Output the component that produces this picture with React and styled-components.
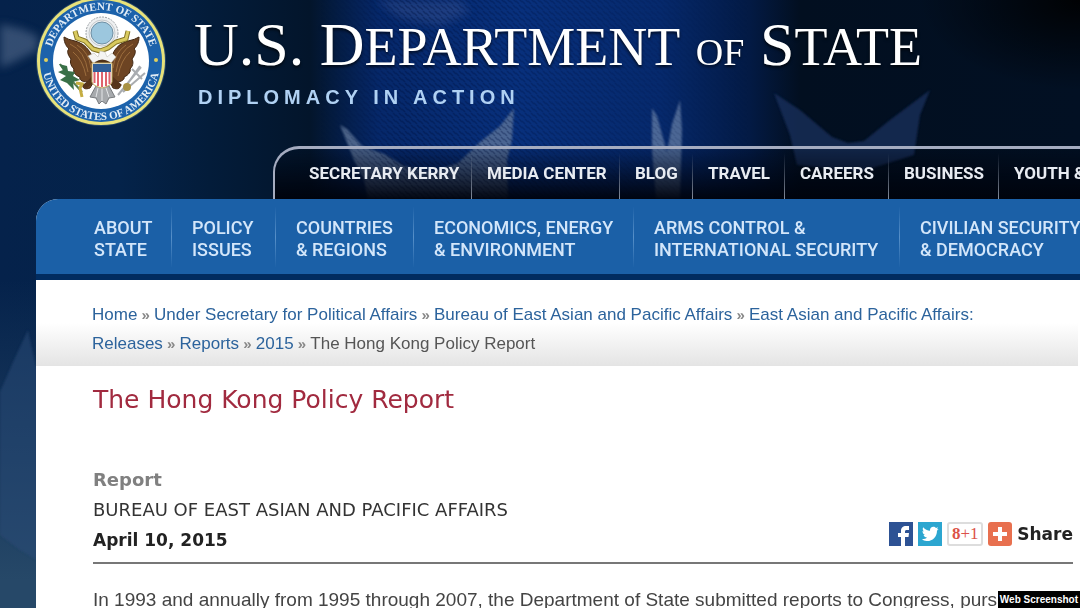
import React from 'react';
import styled, { createGlobalStyle } from 'styled-components';

const topLinks = ['Secretary Kerry', 'Media Center', 'Blog', 'Travel', 'Careers', 'Business', 'Youth & Education'];

const mainLinks = [
  ['About', 'State'],
  ['Policy', 'Issues'],
  ['Countries', '& Regions'],
  ['Economics, Energy', '& Environment'],
  ['Arms Control &', 'International Security'],
  ['Civilian Security', '& Democracy'],
];

const crumbs = [
  'Home',
  'Under Secretary for Political Affairs',
  'Bureau of East Asian and Pacific Affairs',
  'East Asian and Pacific Affairs: Releases',
  'Reports',
  '2015',
];

const Seal = () => (
  <SealSvg viewBox="0 4 130 126" role="img" aria-label="Seal of the Department of State">
    <defs>
      <path id="sealTop" d="M 14 65 A 51 51 0 0 1 116 65" />
      <path id="sealBottom" d="M 6 65 A 59 59 0 0 0 124 65" />
    </defs>
    <circle cx="65" cy="65" r="65" fill="#27476a" />
    <circle cx="65" cy="65" r="64" fill="#e8e27a" />
    <circle cx="65" cy="65" r="61" fill="#1c62ab" />
    <circle cx="65" cy="65" r="48" fill="#fff" />
    <SealText>
      <textPath href="#sealTop" startOffset="50%">DEPARTMENT OF STATE</textPath>
    </SealText>
    <SealText>
      <textPath href="#sealBottom" startOffset="50%">UNITED STATES OF AMERICA</textPath>
    </SealText>
    <circle cx="10" cy="64" r="2" fill="#e0d060" />
    <circle cx="120" cy="64" r="2" fill="#e0d060" />
    {/* glory */}
    <circle cx="66" cy="37" r="16" fill="#eef0f1" stroke="#9da2a6" strokeWidth="1" strokeDasharray="2 1" />
    <circle cx="66" cy="37" r="13" fill="none" stroke="#c5c9cc" strokeWidth="1" />
    <circle cx="66" cy="37" r="11" fill="#9cc7de" stroke="#6f8fa3" strokeWidth="1" />
    {/* wings */}
    <path d="M28 41 C34 45 40 44 46 48 C52 52 56 58 58 66 L60 82 L54 92 C49 94 46 92 47 89 L52 86 C45 86 43 83 44 81 C38 79 37 75 38 73 C34 69 34 65 35 63 C31 58 31 54 33 53 C29 49 28 45 28 41 Z" fill="#6d4423" stroke="#3f2510" />
    <path d="M103 41 C97 45 91 44 85 48 C79 52 76 58 74 66 L72 82 L77 92 C82 94 85 92 84 89 L80 86 C86 86 89 83 88 81 C93 79 95 75 94 73 C98 69 97 65 96 63 C100 58 100 54 98 53 C102 49 103 45 103 41 Z" fill="#6d4423" stroke="#3f2510" />
    <path d="M34 48 Q49 55 52 76 M37 56 Q47 64 50 80 M41 49 Q53 56 55 72 M97 48 Q83 55 80 76 M94 56 Q85 64 82 80 M90 49 Q79 56 77 72" fill="none" stroke="#9c6d3d" strokeWidth="1" />
    {/* ribbon */}
    <path d="M39 35 L41 42 L49 45 L57 53 L64 55 L72 52 L80 46 L90 43 L92 35" fill="none" stroke="#857528" strokeWidth="5" />
    <path d="M39 35 L41 42 L49 45 L57 53 L64 55 L72 52 L80 46 L90 43 L92 35" fill="none" stroke="#d9ca5e" strokeWidth="3" />
    <path d="M52 60 L58 57 L62 61 L64 55 L69 56 L71 61 L76 57 L80 61 L75 67 L57 67 Z" fill="#f4f4f2" stroke="#b9b9ae" strokeWidth="0.5" />
    <path d="M59 66 Q66 61 74 66 L76 72 H57 Z" fill="#4f3119" />
    <path d="M58 86 L50 93 L47 90 L56 80 L76 80 L86 89 L81 93 L74 88 Z" fill="#57351b" />
    {/* tail */}
    <path d="M60 90 L54 101 L60 102 L63 108 L66 105 L70 108 L73 102 L79 101 L73 90 Z" fill="#a7aaad" stroke="#777a7d" />
    <path d="M62 92 L60 101 M66 92 L66 105 M70 92 L73 101" stroke="#e4e6e8" />
    {/* shield */}
    <path d="M56 67 H76 V86 Q75 90 66 92 Q57 90 56 86 Z" fill="#fff" stroke="#c2a860" />
    <path d="M57 68 H75 V76 H57 Z" fill="#315f98" />
    <path d="M58.5 76 V87 M62 76 V90 M66 76 V91 M70 76 V90 M73.500 76 V88" stroke="#e0636d" strokeWidth="2" />
    {/* olive branch and arrows */}
    <path d="M24 68 L30 77 L37 86 L46 96" fill="none" stroke="#557b4c" strokeWidth="2" />
    <path d="M23 68 L31 70 L32 75 L39 76 L37 80 L44 84 L37 86 L38 94 L31 87 L24 84 L30 80 L22 76 L27 74 Z" fill="#397047" />
    <path d="M40 87 L46 88 L44 92 L46 101" fill="none" stroke="#c5ad42" strokeWidth="3" />
    <path d="M82 99 L105 71 M87 96 L109 77 M92 87 L104 70 M96 73 L106 83" stroke="#a9acb0" strokeWidth="2" />
    <circle cx="91" cy="91" r="4" fill="#a99243" />
  </SealSvg>
);

// Faded flag with out-of-focus stars behind the whole page
const Flag = () => (
  <FlagSvg aria-hidden="true">
    <defs>
      <pattern id="weave" width="6" height="6" patternUnits="userSpaceOnUse">
        <path d="M0 1 L3 4 M3 -1 L6 2 M3 5 L6 8" stroke="#00103f" strokeWidth="1.5" opacity="0.4" />
      </pattern>
      <linearGradient id="weaveFade" x1="0" x2="1" y1="0" y2="0">
        <stop offset="0" stopColor="#000" />
        <stop offset="0.2" stopColor="#fff" />
        <stop offset="0.6" stopColor="#999" />
        <stop offset="1" stopColor="#000" />
      </linearGradient>
      <mask id="weaveMask">
        <rect x="320" width="430" height="200" fill="url(#weaveFade)" />
      </mask>
      <filter id="soft" x="-20%" y="-20%" width="140%" height="140%">
        <feGaussianBlur stdDeviation="1" />
      </filter>
      <filter id="softer" x="-40%" y="-40%" width="180%" height="180%">
        <feGaussianBlur stdDeviation="4" />
      </filter>
    </defs>
    <g filter="url(#softer)">
      <path d="M376 0 L460 0 L470 12 L440 26 L400 18 Z" fill="#3b5796" opacity="0.4" />
      <path d="M0 24 L22 29 L38 36 L38 50 L14 62 L0 68 Z" fill="#54698c" opacity="0.6" />
    </g>
    <g filter="url(#soft)">
      <path d="M340 125 L347 129 L362 146 L384 154 L404 166 L432 172 L458 163 L480 142 L500 126 L514 108 L512 140 L507 160 L508 199 L368 199 L364 180 L354 160 Z" fill="#62789b" opacity="0.75" />
      <path d="M652 108 L657 116 L667 152 L672 124 L680 100 L682 130 L680 199 L656 199 L652 150 Z" fill="#647ca4" opacity="0.75" />
      <path d="M774 93 L800 110 L832 137 L848 143 L864 141 L890 120 L930 90 L920 115 L914 155 L860 172 L797 165 L790 135 Z" fill="#1f3767" opacity="0.65" />
      <path d="M28 330 L31 345 L37 370 L37 560 L20 550 L0 535 L0 392 L14 360 Z" fill="#2b4c78" opacity="0.5" />
    </g>
    <rect x="320" width="430" height="200" fill="url(#weave)" mask="url(#weaveMask)" />
  </FlagSvg>
);

const App = () => (
  <>
    <GlobalStyle />
    <Page>
      <Flag />
      <Banner>
        <Seal />
        <div>
          <SiteTitle>
            U.S. D<SmallCap>EPARTMENT</SmallCap> <Of>OF</Of> S<SmallCap>TATE</SmallCap>
          </SiteTitle>
          <Tagline>DIPLOMACY IN ACTION</Tagline>
        </div>
      </Banner>
      <TopNav aria-label="Quick links">
        {topLinks.map((label) => (
          <TopLink key={label} href="#">{label}</TopLink>
        ))}
      </TopNav>
      <Shell>
        <MainNav aria-label="Main">
          {mainLinks.map(([first, second]) => (
            <MainLink key={first} href="#">
              {first}
              <br />
              {second}
            </MainLink>
          ))}
        </MainNav>
        <Crumbs aria-label="Breadcrumb">
          {crumbs.map((crumb) => (
            <React.Fragment key={crumb}>
              <CrumbLink href="#">{crumb}</CrumbLink>
              <Arrow> » </Arrow>
            </React.Fragment>
          ))}
          The Hong Kong Policy Report
        </Crumbs>
        <Article>
          <Title>The Hong Kong Policy Report</Title>
          <Meta>
            <div>
              <Kind>Report</Kind>
              <Bureau>BUREAU OF EAST ASIAN AND PACIFIC AFFAIRS</Bureau>
              <ReportDate>April 10, 2015</ReportDate>
            </div>
            <Share>
              <ShareButton aria-label="Facebook">
                <svg width="24" height="24" viewBox="0 0 24 24">
                  <rect width="24" height="24" fill="#2d5294" />
                  <path d="M12 24 V15 H9 V11 H12 V9 C12 5.500 14 4 17 4 H20 V8 H18 C16.500 8 16 8.500 16 9.500 V11 H20 L19.500 15 H16 V24 Z" fill="#fff" />
                </svg>
              </ShareButton>
              <ShareButton aria-label="Twitter">
                <svg width="24" height="24" viewBox="0 0 24 24">
                  <rect width="24" height="24" fill="#2ca6d0" />
                  <path d="M4 17 C6.500 17 8 16.500 9 15.500 C7 15.500 6 14 5.500 13 H7 C5 12 4.500 10.500 4.500 9 L6 9.500 C4.500 8 4.500 6.500 5.200 5.200 C7 7.500 9.500 8.500 12 8.700 C11.500 5 16 3.500 18 6 L20 5.300 L19 7.200 L20.500 7 L19 8.700 C19 15 14 19.500 8.500 19 C6.500 19 5 18 4 17 Z" fill="#fff" />
                </svg>
              </ShareButton>
              <PlusOne>
                <b>8</b>+1
              </PlusOne>
              <ShareButton aria-label="More services">
                <svg width="24" height="24" viewBox="0 0 24 24">
                  <rect width="24" height="24" rx="3" fill="#e8704f" />
                  <path d="M12 5 V19 M5 12 H19" stroke="#fff" strokeWidth="4" />
                </svg>
              </ShareButton>
              <ShareLabel>Share</ShareLabel>
            </Share>
          </Meta>
          <Body>In 1993 and annually from 1995 through 2007, the Department of State submitted reports to Congress, pursuant</Body>
        </Article>
      </Shell>
      <Credit>Web Screenshot</Credit>
    </Page>
  </>
);

// Styled components
const GlobalStyle = createGlobalStyle`
  * {
    box-sizing: border-box;
  }
  body {
    margin: 0;
    overflow: hidden;
    font-family: 'Liberation Sans', Arial, sans-serif;
  }
  a {
    text-decoration: none;
  }
`;

const Page = styled.div`
  position: relative;
  height: 100vh;
  overflow: hidden;
  display: flex;
  flex-direction: column;
  background:
    radial-gradient(ellipse at 100% 0, rgba(0, 0, 0, 0.9), rgba(0, 0, 0, 0) 160px),
    linear-gradient(180deg, rgba(38, 74, 112, 0) 280px, rgba(38, 72, 104, 1) 580px),
    linear-gradient(90deg, #05224b 0, #04234a 120px, #031c3a 210px, #03152b 310px, #06286a 380px, #08307c 520px, #06296c 660px, #031a44 750px, #020f20 800px, #021023 100%);
`;

const FlagSvg = styled.svg`
  position: absolute;
  top: 0;
  left: 0;
  width: 100%;
  height: 100%;
`;

const Banner = styled.header`
  position: relative;
  display: flex;
  gap: 28px;
  height: 146px;
  padding-left: 36px;
  white-space: nowrap;
`;

const SealSvg = styled.svg`
  flex: none;
  width: 130px;
  height: 126px;
`;

const SealText = styled.text`
  font-family: 'Liberation Serif', serif;
  font-size: 11px;
  font-weight: bold;
  fill: #e3edf6;
  text-anchor: middle;
`;

const SiteTitle = styled.h1`
  margin: 0;
  padding-top: 8px;
  font-family: 'Liberation Serif', 'Times New Roman', serif;
  font-size: 62px;
  line-height: 72px;
  font-weight: normal;
  color: #fff;
  text-shadow: 0 2px 3px rgba(0, 0, 0, 0.7);
`;

const SmallCap = styled.span`
  font-size: 54px;
  line-height: 1;
`;

const Of = styled.span`
  font-size: 38px;
  line-height: 1;
`;

const Tagline = styled.p`
  margin: 0;
  padding-left: 4px;
  font-size: 20px;
  line-height: 34px;
  font-weight: bold;
  letter-spacing: 5px;
  color: #b0d1f3;
`;

const TopNav = styled.nav`
  position: relative;
  display: grid;
  grid-template-columns: 196px 148px 73px 92px 104px 110px 1fr;
  height: 53px;
  margin-left: 273px;
  border: solid #a5acc0;
  border-width: 3px 0 0 2px;
  border-top-left-radius: 26px;
  overflow: hidden;
  white-space: nowrap;
  background: linear-gradient(180deg, rgba(0, 5, 15, 0.1), rgba(0, 3, 12, 0.95));
`;

const TopLink = styled.a`
  padding-left: 15px;
  border-left: 1px solid;
  border-image: linear-gradient(180deg, transparent 10%, #8790a0) 1;
  font-family: Roboto, sans-serif;
  font-size: 17px;
  line-height: 48px;
  font-weight: bold;
  text-transform: uppercase;
  color: #e8ecf2;

  &:first-child {
    padding-left: 34px;
    border: 0;
  }
`;

const Shell = styled.div`
  position: relative;
  flex: 1;
  display: flex;
  flex-direction: column;
  margin-left: 36px;
  border-top-left-radius: 22px;
  overflow: hidden;
  background: #fff;
`;

const MainNav = styled.nav`
  display: grid;
  grid-template-columns: 135px 104px 138px 220px 266px 1fr;
  align-items: center;
  height: 81px;
  flex: none;
  border-bottom: 6px solid #012c60;
  background: #1b60a7;
  white-space: nowrap;
`;

const MainLink = styled.a`
  padding: 10px 0 6px 20px;
  border-left: 1px solid;
  border-image: linear-gradient(180deg, transparent, #5790c9, transparent) 1;
  font-family: Roboto, sans-serif;
  font-size: 18px;
  line-height: 22px;
  font-weight: 500;
  text-transform: uppercase;
  color: #d3e6fa;

  &:first-child {
    padding-left: 58px;
    border: 0;
  }
`;

const Crumbs = styled.nav`
  flex: none;
  padding: 20px 84px 8px 56px;
  border-right: 2px solid #fff;
  font-size: 17px;
  line-height: 29px;
  color: #555;
  background: linear-gradient(180deg, #fff 50%, #e4e4e4);
`;

const CrumbLink = styled.a`
  color: #2c639c;
`;

const Arrow = styled.span`
  font-size: 15px;
  font-weight: bold;
  color: #888;
`;

const Article = styled.main`
  padding: 16px 7px 0 57px;
`;

const Title = styled.h2`
  margin: 0 0 47px;
  font-family: 'DejaVu Sans', Verdana, sans-serif;
  font-size: 25px;
  line-height: 36px;
  font-weight: normal;
  color: #a12a3f;
`;

const Meta = styled.div`
  display: flex;
  justify-content: space-between;
  align-items: flex-end;
  padding-bottom: 7px;
  border-bottom: 2px solid #777;
  font-family: 'DejaVu Sans', Verdana, sans-serif;
`;

const Kind = styled.p`
  margin: 0;
  font-size: 18px;
  line-height: 30px;
  font-weight: bold;
  color: #808080;
`;

const Bureau = styled.p`
  margin: 0;
  font-size: 18px;
  line-height: 30px;
  color: #333;
`;

const ReportDate = styled.p`
  margin: 0;
  font-size: 17px;
  line-height: 30px;
  font-weight: bold;
  color: #222;
`;

const Share = styled.div`
  display: flex;
  align-items: center;
  gap: 5px;
  padding-bottom: 9px;
`;

const ShareButton = styled.button`
  display: block;
  height: 24px;
  padding: 0;
  border: 0;
  background: none;
  cursor: pointer;

  svg {
    display: block;
  }
`;

const PlusOne = styled.button`
  width: 36px;
  height: 24px;
  padding: 0;
  border: 2px solid #ddd;
  border-radius: 3px;
  background: #fff;
  font-family: 'Liberation Serif', serif;
  font-size: 17px;
  line-height: 18px;
  color: #dc5248;
  cursor: pointer;
`;

const ShareLabel = styled.span`
  font-size: 17px;
  line-height: 24px;
  font-weight: bold;
  color: #222;
`;

const Body = styled.p`
  margin: 0;
  padding-top: 22px;
  font-size: 19px;
  line-height: 28px;
  white-space: nowrap;
  color: #444;
`;

const Credit = styled.div`
  position: absolute;
  right: 0;
  bottom: 0;
  padding: 0 2px;
  background: #000;
  font-size: 10px;
  line-height: 17px;
  font-weight: bold;
  color: #fff;
`;

export default App;
